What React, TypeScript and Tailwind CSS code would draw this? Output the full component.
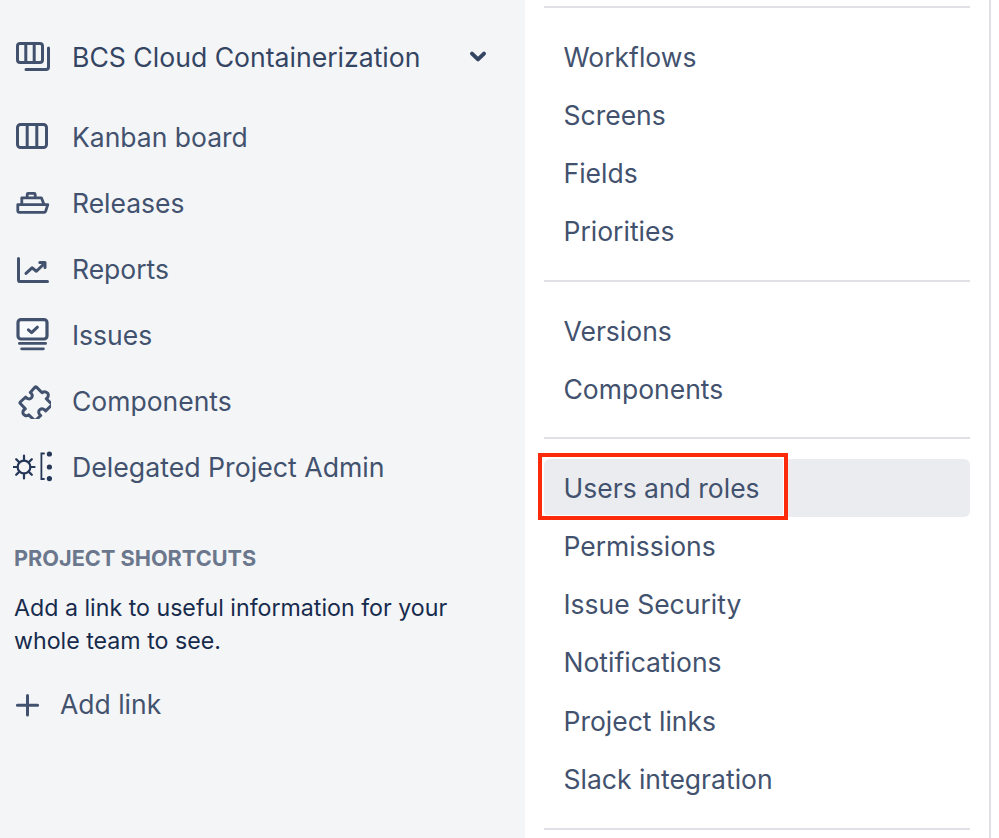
import React from "react";

const Board = () => (
  <svg width="36" height="36" viewBox="0 0 36 36" fill="none" stroke="#42526e" strokeWidth="3" strokeLinejoin="round">
    <rect x="2.5" y="5.5" width="29" height="23" rx="3" />
    <path d="M12.2 5.5v23M21.8 5.5v23" />
  </svg>
);
const Project = () => (
  <svg width="36" height="36" viewBox="0 0 36 36" fill="none" stroke="#42526e" strokeWidth="3" strokeLinejoin="round" strokeLinecap="round">
    <rect x="2.5" y="4.5" width="25" height="19" rx="2.6" />
    <path d="M10.8 4.5v19M19.2 4.5v19" />
    <path d="M33.5 9v19a2.5 2.5 0 0 1-2.5 2.5H11" />
  </svg>
);
const Ship = () => (
  <svg width="36" height="36" viewBox="0 0 36 36" fill="none" stroke="#42526e" strokeWidth="2.8" strokeLinejoin="round">
    <path d="M2.8 19.6h30l-2.2 6.8a1.5 1.5 0 0 1-1.4 1H4.4a1.6 1.6 0 0 1-1.6-1.6z" />
    <path d="M6.8 19.6v-6.8h19.6l2.6 6.8" />
    <path d="M12.2 12.8V9.4a1 1 0 0 1 1-1h6a1 1 0 0 1 1 1v3.4" />
  </svg>
);
const Chart = () => (
  <svg width="36" height="36" viewBox="0 0 36 36" fill="none" stroke="#42526e" strokeWidth="3" strokeLinejoin="round" strokeLinecap="round">
    <path d="M3.5 7.5v21.4a1.6 1.6 0 0 0 1.6 1.6h27.4" />
    <path d="M11 22.4l6-5.6 4.4 3.4 8.2-8" />
    <path d="M24.8 11.4h5.2v5.2" />
  </svg>
);
const Issues = () => (
  <svg width="36" height="36" viewBox="0 0 36 36" fill="none" stroke="#42526e" strokeLinecap="round" strokeLinejoin="round">
    <rect x="3" y="2.6" width="29" height="19.4" rx="3" strokeWidth="3.2" fill="#f9fafb" />
    <path d="M13.4 12.8l3.2 2.8 5.8-5.4" strokeWidth="3" />
    <path d="M4.4 26.4h26.2" strokeWidth="2.8" />
    <path d="M6.6 31.8h21.8" strokeWidth="2.8" />
  </svg>
);
const Puzzle = () => (
  <svg width="36" height="36" viewBox="-2 -2.2 36 36" fill="none" stroke="#42526e" strokeWidth="3" strokeLinejoin="round">
    <path d="M19.5 1.9l5.6 5.6c2.4-1.7 6-.6 6.2 2.2.2 2.2-1 3.2-2 3.8l5.2 5.2a1 1 0 0 1 0 1.4l-5.8 5.6c-1.4-2-3.8-2.8-5.8-1.2-2 1.6-1.2 4.6.8 5.8l-5 4.7a1 1 0 0 1-1.4 0l-5.6-5.4c-2.2 2-5.6.6-5.8-2-.1-2 1-3.4 2.4-4l-5-5.4a1 1 0 0 1 0-1.4l5.4-5c1.4 2 4 2.6 5.6 1 1.8-1.8.8-4.4-1-5.6l4.8-5.3a1 1 0 0 1 1.4 0z" />
  </svg>
);
const Delegated = () => (
  <svg width="40" height="36" viewBox="0 0 40 36" fill="none" stroke="#253858" strokeLinecap="round">
    <circle cx="11" cy="18" r="6.4" strokeWidth="2.2" />
    <path d="M11 6.6v4.4M11 25v4.4M.4 18h4.2M17.4 18h4.2M3.2 10.2L6.4 13.4M15.6 22.6l3.2 3.2M3.2 25.8l3.2-3.2M15.6 13.4l3.2-3.2" strokeWidth="2.2" />
    <path d="M31 4.5h-2.6V30H31" strokeWidth="1.8" />
    <circle cx="36.4" cy="5" r="2.6" fill="#253858" stroke="none" />
    <circle cx="36.4" cy="18" r="2.6" fill="#253858" stroke="none" />
    <circle cx="36.4" cy="29.6" r="2.6" fill="#253858" stroke="none" />
  </svg>
);

const leftItems: [React.ReactNode, string][] = [
  [<Board />, "Kanban board"],
  [<Ship />, "Releases"],
  [<Chart />, "Reports"],
  [<Issues />, "Issues"],
  [<Puzzle />, "Components"],
];

const Row = ({ label }: { label: string }) => (
  <div className="h-[58px] pl-[19.5px] flex items-center text-[#42526e]">{label}</div>
);
const RowWide = ({ label }: { label: string }) => (
  <div className="h-[58.4px] pl-[19.5px] flex items-center text-[#42526e]">{label}</div>
);

const Divider = () => <div className="h-[2px] bg-[#dfe1e6]" />;

export default function App() {
  return (
    <div
      className="w-[999px] h-[838px] overflow-hidden flex bg-white text-[26.5px] leading-[33px]"
      style={{ fontFamily: '"Inter", "Liberation Sans", sans-serif' }}
    >
      <aside className="w-[525px] shrink-0 bg-[#f4f5f7] pl-[14px] pr-[34px] flex flex-col">
        <div className="h-[66px] mt-[24px] flex items-center text-[#42526e] shrink-0">
          <div className="w-[57px] ml-[1px] shrink-0"><Project /></div>
          <span className="flex-1 text-[#344563] text-[26.6px]">BCS Cloud Containerization</span>
          <svg width="24" height="24" viewBox="0 0 24 24" className="mr-[1px]">
            <path d="M6 8.6l6 5.8 6-5.8" fill="none" stroke="#344563" strokeWidth="4" strokeLinecap="round" strokeLinejoin="round" />
          </svg>
        </div>
        <div className="mt-[14px]">
          {leftItems.map(([icon, label]) => (
            <div key={label} className="h-[66px] flex items-center text-[#42526e]">
              <div className="w-[57px] ml-[1px] shrink-0">{icon}</div>
              <span>{label}</span>
            </div>
          ))}
          <div className="h-[66px] flex items-center text-[#42526e]">
            <div className="w-[59px] -ml-[1px] shrink-0"><Delegated /></div>
            <span className="text-[26.7px]">Delegated Project Admin</span>
          </div>
        </div>
        <div className="mt-[45px] text-[21.7px] leading-[26px] font-bold text-[#6b778c]">PROJECT SHORTCUTS</div>
        <p className="mt-[21px] text-[23.2px] leading-[33px] text-[#172b4d]">
          Add a link to useful information for your
          <br />
          whole team to see.
        </p>
        <div className="mt-[30px] h-[33px] flex items-center text-[#42526e]">
          <svg width="46" height="26" viewBox="0 0 46 26" className="shrink-0">
            <path d="M13.5 3.4v19.6M3.4 13.2h20.2" stroke="#42526e" strokeWidth="3" strokeLinecap="round" />
          </svg>
          <span>Add link</span>
        </div>
      </aside>
      <main className="w-[464px] shrink-0 pl-[19px] pt-[6px] flex flex-col">
        <div className="w-[426px]">
          <Divider />
          <div className="py-5">
            {["Workflows", "Screens", "Fields", "Priorities"].map((l) => <Row key={l} label={l} />)}
          </div>
          <Divider />
          <div className="pt-5 pb-[19px]">
            {["Versions", "Components"].map((l) => <Row key={l} label={l} />)}
          </div>
          <Divider />
          <div className="pt-5 pb-[19.5px]">
            <div className="relative h-[58px] rounded-md bg-[#ebecf0] pl-[19.5px] flex items-center text-[#42526e]">
              Users and roles
              <div className="absolute left-[-6px] top-[-6px] w-[250px] h-[67px] border-[4px] border-[#fa2a0b] shadow-[inset_0_0_0_1px_#fff]" />
            </div>
            {["Permissions", "Issue Security", "Notifications", "Project links", "Slack integration"].map((l) => <RowWide key={l} label={l} />)}
          </div>
          <Divider />
        </div>
      </main>
      <div className="w-[2px] h-full bg-[#dfe1e6] shrink-0" />
    </div>
  );
}
